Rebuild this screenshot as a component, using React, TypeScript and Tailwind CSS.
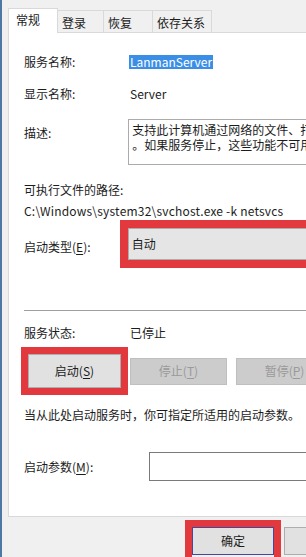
const RED = 'border-[#e2393e]';

function Key({ k }: { k: string }) {
  return (
    <>
      (<span className="underline underline-offset-2">{k}</span>)
    </>
  );
}

function Tab({ label, active }: { label: string; active?: boolean }) {
  if (active) {
    return (
      <div className="relative z-10 -mb-px h-[25px] w-[50px] border border-b-0 border-[#d9d9d9] bg-white pl-[7px] leading-[22px]">
        {label}
      </div>
    );
  }
  return (
    <div className="h-[22px] border border-b-0 border-l-0 border-[#d9d9d9] bg-[#f0f0f0] pl-[4px] pr-[3px] leading-[24px]">
      {label}
    </div>
  );
}

export default function App() {
  return (
    <div className="h-[557px] w-[306px] overflow-hidden border-l-2 border-[#4f77a3] bg-[#f0f0f0] font-['Noto_Sans_CJK_SC',sans-serif] text-[12px] text-[#1c1c1c]">
      <div className="pl-[6px] pt-[8px]">
        <div className="flex h-[24px] items-end">
          <Tab label="常规" active />
          <div className="w-[46px]">
            <Tab label="登录" />
          </div>
          <div className="w-[49px]">
            <Tab label="恢复" />
          </div>
          <div className="w-[59px]">
            <Tab label="依存关系" />
          </div>
        </div>

        <div className="h-[485px] w-[340px] border border-[#d9d9d9] bg-white pl-[15px]">
          <div className="mt-[19px] flex h-[20px] items-center">
            <span className="w-[105px]">服务名称:</span>
            <span className="bg-[#3a8ee6] px-px leading-[14px] text-white">LanmanServer</span>
          </div>
          <div className="mt-[12px] flex h-[20px] items-center">
            <span className="w-[106px]">显示名称:</span>
            <span>Server</span>
          </div>
          <div className="mt-[15px] flex">
            <span className="w-[105px] pt-[4px] leading-[20px]">描述:</span>
            {/* box runs past the window edge, like the dialog in the shot */}
            <div className="h-[46px] w-[220px] overflow-hidden whitespace-nowrap border border-[#ababab] px-[3px] pt-[2px] leading-[15px]">
              <div>支持此计算机通过网络的文件、打</div>
              <div>。如果服务停止，这些功能不可用</div>
            </div>
          </div>
          <div className="mt-[15px] h-[20px] leading-[20px]">可执行文件的路径:</div>
          <div className="mt-px h-[19px] leading-[19px] tracking-[0.2px]">C:\Windows\system32\svchost.exe -k netsvcs</div>

          <div className="flex h-[48px]">
            <span className="w-[97px] pt-[17px] leading-[20px]">
              启动类型<Key k="E" />:
            </span>
            <div className={`h-[48px] w-[230px] border-[8px] ${RED}`}>
              <div className="flex h-full items-center border border-[#acacac] bg-[#e5e5e5] pl-[3px]">自动</div>
            </div>
          </div>

          <div className="mt-[42px] h-px bg-[#a0a0a0]" />

          <div className="mt-[12px] flex h-[20px] items-center">
            <span className="w-[106px]">服务状态:</span>
            <span>已停止</span>
          </div>

          <div className="-ml-[3px] mt-[4px] flex h-[48px] items-center">
            <div className={`h-[48px] w-[107px] border-[7px] ${RED}`}>
              <div className="flex h-full items-center justify-center border border-[#adadad] bg-[#e1e1e1]">
                启动<Key k="S" />
              </div>
            </div>
            <div className="ml-[2px] flex h-[27px] w-[97px] shrink-0 items-center justify-center border border-[#bfbfbf] bg-[#cccccc] text-[#9a9a9a]">
              停止<Key k="T" />
            </div>
            <div className="ml-[9px] flex h-[27px] w-[97px] shrink-0 items-center justify-center border border-[#bfbfbf] bg-[#cccccc] text-[#9a9a9a]">
              暂停<Key k="P" />
            </div>
          </div>

          <div className="mt-[10px] h-[20px] leading-[20px]">当从此处启动服务时，你可指定所适用的启动参数。</div>

          <div className="mt-[27px] flex h-[29px] items-center">
            <span className="w-[126px]">
              启动参数<Key k="M" />:
            </span>
            <div className="h-[29px] w-[200px] border border-[#7a7a7a] bg-white" />
          </div>
        </div>

        <div className="ml-[177px] mt-[3px] flex items-start">
          <div className={`h-[44px] w-[96px] shrink-0 border-[7px] ${RED}`}>
            <div className="flex h-[28px] items-center justify-center border border-[#46469a] bg-[#e1e1e1]">确定</div>
          </div>
          <div className="ml-[3px] mt-[7px] h-[28px] w-[80px] shrink-0 border border-[#adadad] bg-[#e1e1e1]" />
        </div>
      </div>
    </div>
  );
}
